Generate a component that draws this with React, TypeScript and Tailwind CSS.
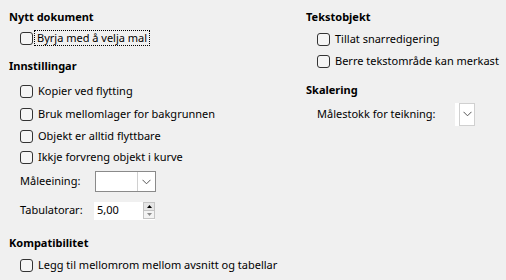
import React from "react"

function Box() {
  return <span className="w-[13px] h-[13px] shrink-0 rounded-[3px] border border-[#333] bg-[#f5f5f5]" />
}

function Check({ label, focus = false, h }: { label: string; focus?: boolean; h: string }) {
  return (
    <div className={`flex items-center gap-[1px] pl-[11px] ${h}`}>
      <Box />
      <span
        className={
          focus
            ? "px-[3px] leading-[16px] outline outline-1 outline-dotted outline-black -outline-offset-1"
            : "px-[4px]"
        }
      >
        {label}
      </span>
    </div>
  )
}

function Heading({ children, h }: { children: React.ReactNode; h: string }) {
  return <div className={`flex items-center font-bold ${h}`}>{children}</div>
}

function Chevron() {
  return (
    <svg width="9" height="6" viewBox="0 0 9 6" fill="none" stroke="#555" strokeWidth="1">
      <path d="M0.5 0.8 L4.5 4.8 L8.5 0.8" />
    </svg>
  )
}

export default function App() {
  return (
    <div
      className="w-[506px] h-[280px] bg-[#f0f0f0] text-black text-[11px] flex whitespace-nowrap"
      style={{ fontFamily: '"Noto Sans", sans-serif' }}
    >
      {/* Left column */}
      <div className="w-[306px] shrink-0 pl-[9px] pt-[6px] flex flex-col">
        <Heading h="h-[22px]">Nytt dokument</Heading>
        <Check label="Byrja med å velja mal" focus h="h-[20px]" />
        <Heading h="h-[20px] mt-[8px]">Innstillingar</Heading>
        <Check label="Kopier ved flytting" h="h-[22px] mt-[4px]" />
        <Check label="Bruk mellomlager for bakgrunnen" h="h-[22px] mt-[1px]" />
        <Check label="Objekt er alltid flyttbare" h="h-[22px]" />
        <Check label="Ikkje forvreng objekt i kurve" h="h-[22px] -mt-[1px]" />

        <div className="flex items-center pl-[11px] h-[27px]">
          <span className="w-[75px]">Måleeining:</span>
          <div className="w-[61px] h-[21px] bg-white border border-[#8a8a8a] flex">
            <div className="flex-1" />
            <div className="w-[18px] border-l border-[#d0d0d0] flex items-center justify-center">
              <Chevron />
            </div>
          </div>
        </div>

        <div className="flex items-center pl-[11px] h-[31px]">
          <span className="w-[74px]">Tabulatorar:</span>
          <div className="w-[61px] h-[18px] bg-white flex items-center">
            <span className="pl-[3px] flex-1">5,00</span>
            <div className="w-[12px] h-[17px] flex flex-col border border-[#c4c4c4]">
              <div className="flex-1 bg-[#e5e5e5] border-b border-[#c4c4c4] flex items-center justify-center">
                <svg width="5" height="3" viewBox="0 0 5 3">
                  <path d="M0 3 L2.5 0 L5 3Z" fill="#000" />
                </svg>
              </div>
              <div className="flex-1 bg-[#f3f3f3] flex items-center justify-center">
                <svg width="5" height="3" viewBox="0 0 5 3">
                  <path d="M0 0 L2.5 3 L5 0Z" fill="#8c8c8c" />
                </svg>
              </div>
            </div>
          </div>
        </div>

        <Heading h="h-[20px] mt-[7px]">Kompatibilitet</Heading>
        <Check label="Legg til mellomrom mellom avsnitt og tabellar" h="h-[24px]" />
      </div>

      {/* Right column */}
      <div className="flex-1 pt-[6px] flex flex-col">
        <Heading h="h-[22px]">Tekstobjekt</Heading>
        <Check label="Tillat snarredigering" h="h-[22px]" />
        <Check label="Berre tekstområde kan merkast" h="h-[23px]" />
        <Heading h="h-[20px] mt-[7px]">Skalering</Heading>
        <div className="flex items-center pl-[11px] h-[28px]">
          <span className="w-[138px]">Målestokk for teikning:</span>
          <div className="w-[20px] h-[23px] bg-white flex">
            <div className="w-[4px]" />
            <div className="flex-1 border border-[#d0d0d0] flex items-center justify-center">
              <Chevron />
            </div>
          </div>
        </div>
      </div>
    </div>
  )
}
